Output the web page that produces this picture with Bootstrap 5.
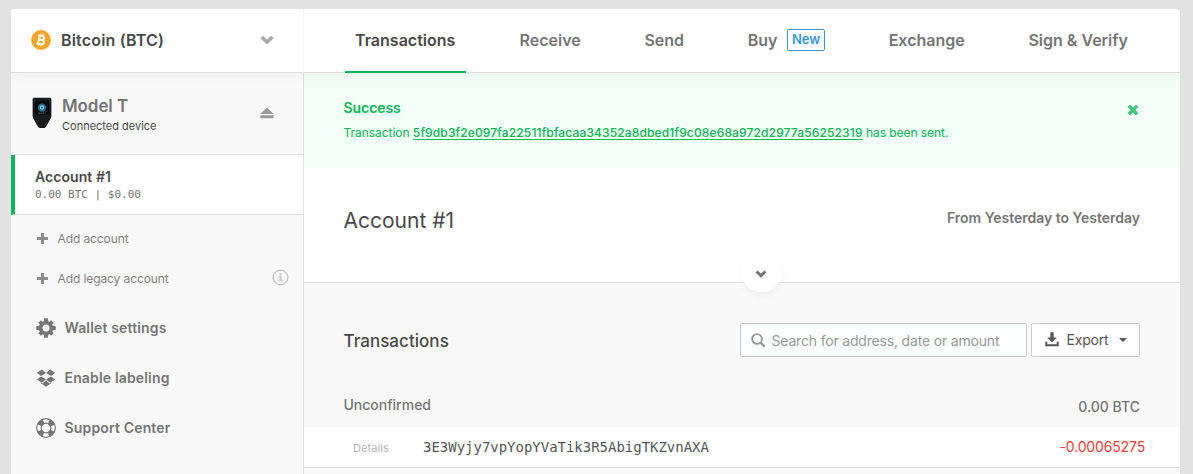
<!DOCTYPE html>
<html lang="en">
<head>
<meta charset="utf-8">
<meta name="viewport" content="width=device-width, initial-scale=1">
<title>Wallet – Account #1</title>
<link rel="stylesheet" href="https://cdn.jsdelivr.net/npm/bootstrap@5.3.0/dist/css/bootstrap.min.css">
<style>
  body { font-family: Inter, "Liberation Sans", sans-serif; background: #e2e2e2; color: #494949; height: 474px; overflow: hidden; font-size: 14px; line-height: 20px; }
  a { color: inherit; text-decoration: none; }
  svg { display: block; flex: none; fill: currentColor; }
  .wallet { margin: 9px 13px 0 11px; height: 465px; border-radius: 4px 4px 0 0; background: #f9f9f9; overflow: hidden; }
  .topbar { height: 64px; border-bottom: 1px solid #dfdfdf; background: #fff; box-shadow: 0 3px 9px rgba(0,0,0,.045); position: relative; z-index: 1; }
  .side { width: 293px; border-right: 1px solid #e0e0e0; }
  .coin { border-right: 1px solid #f0f3f1; width: 293px; padding: 0 29px 2px 20px; }
  .semi { font-weight: 600; }
  .title16 { font-size: 16px; font-weight: 600; letter-spacing: .17px; margin-left: 10px; }
  .muted { color: #757575; }
  .tabs { padding-left: 41px; gap: 42.7px; }
  .tabs .nav-link { color: #757575; padding: 0 10.5px; height: 64px; line-height: 63px; font-size: 16px; font-weight: 600; }
  .tabs .nav-link.active { color: #494949; padding: 0 11px 0 10px; border-bottom: 2px solid #01b757; }
  .tag-new { border: 1px solid #3498db; border-radius: 2px; color: #3498db; font-size: 13px; line-height: 19px; height: 22px; width: 38px; margin: 20px 0 0 9.5px; text-align: center; letter-spacing: -.1px; }
  .device { height: 82px; border-bottom: 1px solid #e0e0e0; padding: 0 29px 0 21px; }
  .account { height: 60px; border-bottom: 1px solid #e0e0e0; border-left: 4px solid #01b757; background: #fff; padding: 12px 0 0 20px; }
  .account-sum { font: 11px/14px "DejaVu Sans Mono", monospace; color: #757575; margin-top: 1px; }
  .add-row { height: 40px; padding: 0 14px 0 26px; font-size: 12px; letter-spacing: -.1px; color: #828282; }
  .add-row .plus { margin: 0 9.5px 2px 0; color: #8c8c8c; }
  .menu-row { height: 50px; padding-left: 25px; gap: 8.5px; color: #757575; font-weight: 600; letter-spacing: .16px; }
  .notice { height: 95px; background: #f3fef8; color: #01b757; padding: 25px 41px 0 39.6px; }
  .notice p { font-size: 12px; letter-spacing: -.05px; margin: 5px 0 0; }
  .notice p a { letter-spacing: .14px; font-weight: 500; text-decoration: underline; text-underline-offset: 2px; }
  .summary { height: 115px; background: #fff; border-bottom: 1px solid #e0e0e0; padding: 41px 40px 0 39.5px; position: relative; }
  .round-toggle { position: absolute; left: 437px; bottom: -10px; width: 41px; height: 41px; border-radius: 50%; background: #fff; color: #757575; box-shadow: 0 4px 9px rgba(0,0,0,.04); padding: 5px 1px 0 0; }
  .tools { height: 34px; margin: 40px 40px 0 39.5px; }
  .field { border: 1px solid #c9c9c9; border-radius: 2px; height: 34px; background: #fff; }
  .search { width: 287px; background: #fbfffd; color: #999; padding-left: 10px; margin-right: 4px; }
  .search input { border: 0; outline: 0; background: none; padding: 2px 0 0; margin-left: 5.5px; width: 250px; letter-spacing: -.18px; }
  .search input::placeholder { color: #999; opacity: 1; }
  .export { width: 109px; padding: 0 12px 0 13px; color: #555; letter-spacing: -.18px; }
  .day { height: 70px; padding: 38px 40px 0 39.5px; font-weight: 500; color: #757575; }
  .tx { height: 41px; background: #fff; border-bottom: 1px solid #e0e0e0; padding: 0 35px 0 49px; }
  .tx-addr { font: 14px/20px "DejaVu Sans Mono", monospace; letter-spacing: -.02px; color: #55555a; margin-left: 34px; }
</style>
</head>
<body>
<div class="wallet">
  <header class="topbar d-flex">
    <div class="coin d-flex align-items-center">
      <svg width="20" height="20" viewBox="0 0 20 20"><circle cx="10" cy="10" r="9.900" fill="#f7a526"/><g transform="rotate(13 10 10)" fill="none" stroke="#fff"><path d="M7.900 5.500v9M6.400 5.800h4.300a2 2 0 0 1 0 4H8.200M10.700 9.800h.5a2.200 2.200 0 0 1 0 4.400H6.400" stroke-width="1.900"/><path d="M8.800 3.800v1.800M11 3.800v1.800M8.800 14.400v1.800M11 14.400v1.800" stroke-width="1.200"/></g></svg>
      <span class="title16">Bitcoin (BTC)</span>
      <svg class="ms-auto" width="14" height="10" viewBox="0 0 15 10" style="color:#aaa"><path d="M3.200.4 7.500 4.500 11.800.4 14.600 3 7.500 9.800.4 3z"/></svg>
    </div>
    <nav class="nav tabs flex-nowrap">
      <a class="nav-link active" href="#">Transactions</a>
      <a class="nav-link" href="#">Receive</a>
      <a class="nav-link" href="#">Send</a>
      <a class="nav-link d-flex" href="#">Buy <span class="tag-new">New</span></a>
      <a class="nav-link" href="#">Exchange</a>
      <a class="nav-link" href="#">Sign &amp; Verify</a>
    </nav>
  </header>
  <div class="d-flex h-100">
    <aside class="side flex-shrink-0">
      <div class="device d-flex align-items-center">
        <svg width="20" height="32" viewBox="0 0 20 32" style="margin-bottom:1px"><path d="M2 .8h16q1.400 0 1.400 1.500v16.500q0 1.500-.8 2.800l-4.400 8q-.7 1.400-2 1.400H7.800q-1.300 0-2-1.400l-4.400-8Q.6 20.300.6 18.800V2.300Q.6.8 2 .8z" fill="#191a1b"/><path d="M3 4h14v13.500H3z" fill="#08090a"/><circle cx="10" cy="10.600" r="4.200" fill="#226b8c"/><circle cx="10" cy="10.500" r="2.300" fill="#88bed2"/><path d="M9.200 9.800h1.600v1.600H9.200z" fill="#286f8f"/><path d="M6.500 16.100h7" stroke="#888" stroke-width=".8" stroke-dasharray="1.500 .6"/></svg>
        <div style="margin-left:10px;padding-top:3px">
          <div class="semi muted" style="font-size:17px;line-height:21px;letter-spacing:-.08px">Model T</div>
          <div style="font-size:11px;line-height:18px">Connected device</div>
        </div>
        <svg class="ms-auto" width="14" height="12" viewBox="0 0 14 12" style="color:#999;margin-bottom:1px"><path d="M7 .5 13.600 7H.4zM.4 8.300h13.200V11.200H.4z"/></svg>
      </div>
      <div class="account">
        <div class="semi" style="letter-spacing:.07px">Account #1</div>
        <div class="account-sum">0.00 BTC | $0.00</div>
      </div>
      <div style="height:4px"></div>
      <div class="add-row d-flex align-items-center">
        <svg class="plus" width="11" height="11" viewBox="0 0 11 11"><path d="M4 0h3v4h4v3H7v4H4V7H0V4h4z"/></svg>
        <span>Add account</span>
      </div>
      <div class="add-row d-flex align-items-center">
        <svg class="plus" width="11" height="11" viewBox="0 0 11 11"><path d="M4 0h3v4h4v3H7v4H4V7H0V4h4z"/></svg>
        <span>Add legacy account</span>
        <svg class="ms-auto" width="17" height="17" viewBox="0 0 17 17" style="color:#c4c4c4;margin-bottom:3px"><circle cx="8.500" cy="8.500" r="7.300" fill="none" stroke="currentColor" stroke-width="1.300"/><path d="M7.500 4.500h2v1.700h-2zM6.600 7.200h2.900v4h1.100v1H6.400v-1h1.200v-3h-1z"/></svg>
      </div>
      <div style="height:4px"></div>
      <div class="menu-row d-flex align-items-center">
        <svg width="20" height="20" viewBox="0 0 20 20"><path d="M8.200.2h3.600l.7 4H7.500zM8.200 19.800h3.600l.7-4H7.500zM.2 8.200v3.600l4 .7V7.500zM19.800 8.200v3.600l-4 .7V7.500z"/><path d="M8.300.900h3.400l.5 3.500H7.800zM8.300 19.100h3.400l.5-3.500H7.800zM.9 8.300v3.400l3.500.5V7.800zM19.100 8.300v3.400l-3.500.5V7.800z" transform="rotate(45 10 10)"/><circle cx="10" cy="10" r="5.300" fill="none" stroke="currentColor" stroke-width="3.600"/></svg>
        <span>Wallet settings</span>
      </div>
      <div class="menu-row d-flex align-items-center">
        <svg width="20" height="18" viewBox="0 0 20 18"><path d="M5.800.5 10 3.900 5 7 .9 3.800zM14.200.5 10 3.900 15 7l4.100-3.200zM5 7.400 10 10.500 5.800 13.700.9 10.600zM15 7.400 10 10.500 14.200 13.700 19.100 10.600z"/><path d="M10 11.600 13.600 14.400 15.500 13.300v.8L10 17.700 4.500 14.100v-.8L6.400 14.400z"/></svg>
        <span>Enable labeling</span>
      </div>
      <div class="menu-row d-flex align-items-center">
        <svg width="20" height="20" viewBox="0 0 20 20" stroke="currentColor" style="fill:none"><circle cx="10" cy="10" r="9.300" stroke-width="1.200"/><circle cx="10" cy="10" r="4.900" stroke-width="1.100"/><circle cx="10" cy="10" r="7" stroke-width="5" stroke-dasharray="5.500 5.496" transform="rotate(22.500 10 10)"/></svg>
        <span>Support Center</span>
      </div>
    </aside>
    <main class="flex-grow-1">
      <div class="notice d-flex justify-content-between">
        <div>
          <div class="semi" style="letter-spacing:-.08px">Success</div>
          <p>Transaction <a href="#">5f9db3f2e097fa22511fbfacaa34352a8dbed1f9c08e68a972d2977a56252319</a> has been sent.</p>
        </div>
        <svg width="12" height="12" viewBox="0 0 12 12" style="color:#3dc87e;margin-top:6px"><path d="M1.800 1.800 10.200 10.200M10.200 1.800 1.800 10.200" stroke="currentColor" stroke-width="3.400"/></svg>
      </div>
      <div class="summary d-flex justify-content-between">
        <div style="font-size:21px;line-height:24px">Account #1</div>
        <div class="semi muted" style="margin-top:-1px;letter-spacing:-.02px">From Yesterday to Yesterday</div>
        <div class="round-toggle d-flex align-items-center justify-content-center"><svg width="12" height="8" viewBox="0 0 12 8"><path d="M2.500.4 6 3.600 9.500.4 11.500 2.500 6 7.700.5 2.500z"/></svg></div>
      </div>
      <div class="tools d-flex align-items-center">
        <div class="me-auto" style="font-size:17px;font-weight:500;letter-spacing:.04px;padding-top:2px">Transactions</div>
        <label class="field search d-flex align-items-center">
          <svg width="15" height="15" viewBox="0 0 15 15" stroke="currentColor" style="fill:none"><circle cx="6" cy="6" r="4.900" stroke-width="1.900"/><path d="M9.600 9.600 13.600 13.600" stroke-width="2.300"/></svg>
          <input type="text" placeholder="Search for address, date or amount">
        </label>
        <button class="field export d-flex align-items-center">
          <svg width="14" height="15" viewBox="0 0 14 15" style="margin-bottom:2px"><path d="M5.400.3h3.200v5.200h3.200L7 10.300 2.200 5.500h3.200zM.3 9.800h2v2.500h9.400V9.800h2v4.500H.3z"/></svg>
          <span style="margin-left:7.500px">Export</span>
          <svg class="ms-auto" width="8" height="4" viewBox="0 0 8 4"><path d="M0 0h8L4 4z"/></svg>
        </button>
      </div>
      <div class="day d-flex justify-content-between"><span>Unconfirmed</span><span style="padding-top:2px">0.00 BTC</span></div>
      <div class="tx d-flex align-items-center">
        <span style="font-size:11px;color:#b5b5b5;letter-spacing:.1px;padding-top:1px">Details</span>
        <span class="tx-addr">3E3Wyjy7vpYopYVaTik3R5AbigTKZvnAXA</span>
        <span class="ms-auto" style="color:#ff3b3b;letter-spacing:-.15px">-0.00065275</span>
      </div>
    </main>
  </div>
</div>
<script src="https://cdn.jsdelivr.net/npm/bootstrap@5.3.0/dist/js/bootstrap.bundle.min.js"></script>
</body>
</html>
